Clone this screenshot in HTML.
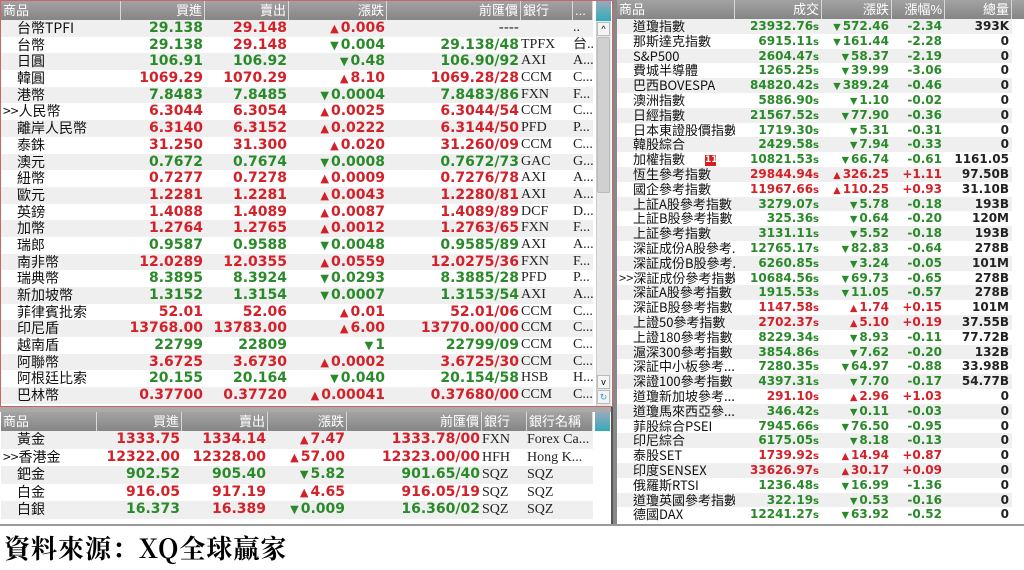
<!DOCTYPE html>
<html><head><meta charset="utf-8"><style>
*{margin:0;padding:0;box-sizing:border-box}
body{width:1024px;height:570px;background:#fff;position:relative;overflow:hidden;font-family:"Liberation Sans","Noto Sans CJK TC",sans-serif}
table{display:block;position:absolute}
tbody{display:block}
tr{display:flex;overflow:hidden}
td,th{display:block;flex:none;white-space:nowrap;overflow:hidden;padding:0}
th{background:linear-gradient(#a3a3a3,#858585);color:#fff;font-weight:normal;font-size:13px;text-align:right;border-right:1px solid #d8d8d8;padding-right:2px;line-height:19px;height:19px}
th.l{text-align:left;padding-left:2px}
tr:nth-child(even) td{background:#efefef}
.n{font-family:"Noto Sans CJK TC",sans-serif;padding-left:16px;color:#111}
.p{padding-left:2px}
.v{font-family:"DejaVu Sans",sans-serif;font-weight:bold;text-align:right}
.g{color:#2a8a2a}.r{color:#d42028}.k{color:#222}
.b{font-family:"Liberation Serif",serif;color:#222}
.ar{font-size:0.8em;margin-right:2px;vertical-align:0}
#lt tr{height:16.7px}#lt td{height:16.7px;font-size:14px;line-height:16.7px}
#lt .v{font-size:14px;padding-right:2px}
#lb tr{height:17.5px}#lb td{height:17.5px;font-size:14px;line-height:17.5px}
#lb .v{font-size:14px;padding-right:2px}
#rt tr{height:14.8px}#rt td{height:14.8px;font-size:13px;line-height:14.8px}
#rt .v{font-size:12px;padding-right:3px}
#lt tr:first-child,#lb tr:first-child,#rt tr:first-child{height:19px}
#lt>tbody>tr>*:nth-child(1){width:120px}#lt>tbody>tr>*:nth-child(2){width:84px}#lt>tbody>tr>*:nth-child(3){width:84px}#lt>tbody>tr>*:nth-child(4){width:98px}#lt>tbody>tr>*:nth-child(5){width:134px}#lt>tbody>tr>*:nth-child(6){width:52px}#lt>tbody>tr>*:nth-child(7){width:20px}
#lb>tbody>tr>*:nth-child(1){width:96px}#lb>tbody>tr>*:nth-child(2){width:85px}#lb>tbody>tr>*:nth-child(3){width:86px}#lb>tbody>tr>*:nth-child(4){width:79px}#lb>tbody>tr>*:nth-child(5){width:135px}#lb>tbody>tr>*:nth-child(6){width:45px}#lb>tbody>tr>*:nth-child(7){width:66px}
#rt>tbody>tr>*:nth-child(1){width:118px}#rt>tbody>tr>*:nth-child(2){width:87px}#rt>tbody>tr>*:nth-child(3){width:70px}#rt>tbody>tr>*:nth-child(4){width:53px}#rt>tbody>tr>*:nth-child(5){width:67px}
.s{font-size:10px}
.badge{display:inline-block;background:#d42020;color:#fff;font-size:9px;font-family:"DejaVu Sans",sans-serif;font-weight:bold;width:11px;height:11px;line-height:11px;text-align:center;margin-left:20px;vertical-align:middle}
</style></head><body>
<div style="position:absolute;left:0;top:0;width:613px;height:407px;border:1px solid #c66"></div>
<div style="position:absolute;left:613px;top:0;width:4px;height:525px;background:#888"></div>
<div style="position:absolute;left:0;top:407px;width:613px;height:5px;background:#aaa"></div>
<div style="position:absolute;left:611px;top:407px;width:2px;height:118px;background:#555"></div>
<div style="position:absolute;left:0;top:524px;width:1024px;height:2px;background:#999"></div>

<table id="lt" style="left:1px;top:1px;width:592px">
<tr><th class="l">商品</th><th>買進</th><th>賣出</th><th>漲跌</th><th>前匯價</th><th class="l">銀行</th><th class="l">...</th></tr>
<tr><td class="n">台幣TPFI</td><td class="v g">29.138</td><td class="v r">29.148</td><td class="v r"><span class="ar">▲</span>0.006</td><td class="v k" style="font-weight:normal">----</td><td class="b"></td><td class="b">..</td></tr>
<tr><td class="n">台幣</td><td class="v g">29.138</td><td class="v r">29.148</td><td class="v g"><span class="ar">▼</span>0.004</td><td class="v g">29.138/48</td><td class="b">TPFX</td><td class="b">台..</td></tr>
<tr><td class="n">日圓</td><td class="v g">106.91</td><td class="v g">106.92</td><td class="v g"><span class="ar">▼</span>0.48</td><td class="v g">106.90/92</td><td class="b">AXI</td><td class="b">A...</td></tr>
<tr><td class="n">韓圓</td><td class="v r">1069.29</td><td class="v r">1070.29</td><td class="v r"><span class="ar">▲</span>8.10</td><td class="v r">1069.28/28</td><td class="b">CCM</td><td class="b">C...</td></tr>
<tr><td class="n">港幣</td><td class="v g">7.8483</td><td class="v g">7.8485</td><td class="v g"><span class="ar">▼</span>0.0004</td><td class="v g">7.8483/86</td><td class="b">FXN</td><td class="b">F...</td></tr>
<tr><td class="n p">&gt;&gt;人民幣</td><td class="v r">6.3044</td><td class="v r">6.3054</td><td class="v r"><span class="ar">▲</span>0.0025</td><td class="v r">6.3044/54</td><td class="b">CCM</td><td class="b">C...</td></tr>
<tr><td class="n">離岸人民幣</td><td class="v r">6.3140</td><td class="v r">6.3152</td><td class="v r"><span class="ar">▲</span>0.0222</td><td class="v r">6.3144/50</td><td class="b">PFD</td><td class="b">P...</td></tr>
<tr><td class="n">泰銖</td><td class="v r">31.250</td><td class="v r">31.300</td><td class="v r"><span class="ar">▲</span>0.020</td><td class="v r">31.260/09</td><td class="b">CCM</td><td class="b">C...</td></tr>
<tr><td class="n">澳元</td><td class="v g">0.7672</td><td class="v g">0.7674</td><td class="v g"><span class="ar">▼</span>0.0008</td><td class="v g">0.7672/73</td><td class="b">GAC</td><td class="b">G...</td></tr>
<tr><td class="n">紐幣</td><td class="v r">0.7277</td><td class="v r">0.7278</td><td class="v r"><span class="ar">▲</span>0.0009</td><td class="v r">0.7276/78</td><td class="b">AXI</td><td class="b">A...</td></tr>
<tr><td class="n">歐元</td><td class="v r">1.2281</td><td class="v r">1.2281</td><td class="v r"><span class="ar">▲</span>0.0043</td><td class="v r">1.2280/81</td><td class="b">AXI</td><td class="b">A...</td></tr>
<tr><td class="n">英鎊</td><td class="v r">1.4088</td><td class="v r">1.4089</td><td class="v r"><span class="ar">▲</span>0.0087</td><td class="v r">1.4089/89</td><td class="b">DCF</td><td class="b">D...</td></tr>
<tr><td class="n">加幣</td><td class="v r">1.2764</td><td class="v r">1.2765</td><td class="v r"><span class="ar">▲</span>0.0012</td><td class="v r">1.2763/65</td><td class="b">FXN</td><td class="b">F...</td></tr>
<tr><td class="n">瑞郎</td><td class="v g">0.9587</td><td class="v g">0.9588</td><td class="v g"><span class="ar">▼</span>0.0048</td><td class="v g">0.9585/89</td><td class="b">AXI</td><td class="b">A...</td></tr>
<tr><td class="n">南非幣</td><td class="v r">12.0289</td><td class="v r">12.0355</td><td class="v r"><span class="ar">▲</span>0.0559</td><td class="v r">12.0275/36</td><td class="b">FXN</td><td class="b">F...</td></tr>
<tr><td class="n">瑞典幣</td><td class="v g">8.3895</td><td class="v g">8.3924</td><td class="v g"><span class="ar">▼</span>0.0293</td><td class="v g">8.3885/28</td><td class="b">PFD</td><td class="b">P...</td></tr>
<tr><td class="n">新加坡幣</td><td class="v g">1.3152</td><td class="v g">1.3154</td><td class="v g"><span class="ar">▼</span>0.0007</td><td class="v g">1.3153/54</td><td class="b">AXI</td><td class="b">A...</td></tr>
<tr><td class="n">菲律賓批索</td><td class="v r">52.01</td><td class="v r">52.06</td><td class="v r"><span class="ar">▲</span>0.01</td><td class="v r">52.01/06</td><td class="b">CCM</td><td class="b">C...</td></tr>
<tr><td class="n">印尼盾</td><td class="v r">13768.00</td><td class="v r">13783.00</td><td class="v r"><span class="ar">▲</span>6.00</td><td class="v r">13770.00/00</td><td class="b">CCM</td><td class="b">C...</td></tr>
<tr><td class="n">越南盾</td><td class="v g">22799</td><td class="v g">22809</td><td class="v g"><span class="ar">▼</span>1</td><td class="v g">22799/09</td><td class="b">CCM</td><td class="b">C...</td></tr>
<tr><td class="n">阿聯幣</td><td class="v r">3.6725</td><td class="v r">3.6730</td><td class="v r"><span class="ar">▲</span>0.0002</td><td class="v r">3.6725/30</td><td class="b">CCM</td><td class="b">C...</td></tr>
<tr><td class="n">阿根廷比索</td><td class="v g">20.155</td><td class="v g">20.164</td><td class="v g"><span class="ar">▼</span>0.040</td><td class="v g">20.154/58</td><td class="b">HSB</td><td class="b">H...</td></tr>
<tr><td class="n">巴林幣</td><td class="v r">0.37700</td><td class="v r">0.37720</td><td class="v r"><span class="ar">▲</span>0.00041</td><td class="v r">0.37680/00</td><td class="b">CCM</td><td class="b">C...</td></tr>
</table>
<div style="position:absolute;left:596px;top:1px;width:15px;height:405px;background:#e8e8e8;border-left:1px solid #ccc"></div>
<div style="position:absolute;left:596px;top:1px;width:15px;height:20px;background:linear-gradient(#9ab,#3ab)"></div>
<div style="position:absolute;left:597px;top:22px;width:13px;height:14px;background:#f4f4f4;border:1px solid #bbb;font-size:9px;text-align:center;line-height:12px">^</div>
<div style="position:absolute;left:597px;top:37px;width:13px;height:156px;background:#d0d0d0;border:1px solid #bbb;border-radius:2px"></div>
<div style="position:absolute;left:597px;top:375px;width:13px;height:14px;background:#f4f4f4;border:1px solid #bbb;font-size:9px;text-align:center;line-height:12px">v</div>
<div style="position:absolute;left:597px;top:390px;width:13px;height:14px;background:#f4f4f4;border:1px solid #bbb;font-size:9px;color:#49c;text-align:center;line-height:12px">↻</div>

<table id="lb" style="left:1px;top:412px;width:592px">
<tr><th class="l">商品</th><th>買進</th><th>賣出</th><th>漲跌</th><th>前匯價</th><th class="l">銀行</th><th class="l">銀行名稱</th></tr>
<tr><td class="n">黃金</td><td class="v r">1333.75</td><td class="v r">1334.14</td><td class="v r"><span class="ar">▲</span>7.47</td><td class="v r">1333.78/00</td><td class="b">FXN</td><td class="b">Forex Ca...</td></tr>
<tr><td class="n p">&gt;&gt;香港金</td><td class="v r">12322.00</td><td class="v r">12328.00</td><td class="v r"><span class="ar">▲</span>57.00</td><td class="v r">12323.00/00</td><td class="b">HFH</td><td class="b">Hong K...</td></tr>
<tr><td class="n">鈀金</td><td class="v g">902.52</td><td class="v g">905.40</td><td class="v g"><span class="ar">▼</span>5.82</td><td class="v g">901.65/40</td><td class="b">SQZ</td><td class="b">SQZ</td></tr>
<tr><td class="n">白金</td><td class="v r">916.05</td><td class="v r">917.19</td><td class="v r"><span class="ar">▲</span>4.65</td><td class="v r">916.05/19</td><td class="b">SQZ</td><td class="b">SQZ</td></tr>
<tr><td class="n">白銀</td><td class="v g">16.373</td><td class="v r">16.389</td><td class="v g"><span class="ar">▼</span>0.009</td><td class="v g">16.360/02</td><td class="b">SQZ</td><td class="b">SQZ</td></tr>
</table>
<div style="position:absolute;left:595px;top:412px;width:15px;height:19px;background:linear-gradient(#9ab,#3ab)"></div>

<div style="position:absolute;left:617px;top:0;width:407px;height:19px;background:linear-gradient(#a3a3a3,#858585)"></div>
<table id="rt" style="left:617px;top:0;width:395px">
<tr><th class="l">商品</th><th>成交</th><th>漲跌</th><th>漲幅%</th><th>總量</th></tr>
<tr><td class="n">道瓊指數</td><td class="v g">23932.76<span class="s">s</span></td><td class="v g"><span class="ar">▼</span>572.46</td><td class="v g">-2.34</td><td class="v k">393K</td></tr>
<tr><td class="n">那斯達克指數</td><td class="v g">6915.11<span class="s">s</span></td><td class="v g"><span class="ar">▼</span>161.44</td><td class="v g">-2.28</td><td class="v k">0</td></tr>
<tr><td class="n">S&amp;P500</td><td class="v g">2604.47<span class="s">s</span></td><td class="v g"><span class="ar">▼</span>58.37</td><td class="v g">-2.19</td><td class="v k">0</td></tr>
<tr><td class="n">費城半導體</td><td class="v g">1265.25<span class="s">s</span></td><td class="v g"><span class="ar">▼</span>39.99</td><td class="v g">-3.06</td><td class="v k">0</td></tr>
<tr><td class="n">巴西BOVESPA</td><td class="v g">84820.42<span class="s">s</span></td><td class="v g"><span class="ar">▼</span>389.24</td><td class="v g">-0.46</td><td class="v k">0</td></tr>
<tr><td class="n">澳洲指數</td><td class="v g">5886.90<span class="s">s</span></td><td class="v g"><span class="ar">▼</span>1.10</td><td class="v g">-0.02</td><td class="v k">0</td></tr>
<tr><td class="n">日經指數</td><td class="v g">21567.52<span class="s">s</span></td><td class="v g"><span class="ar">▼</span>77.90</td><td class="v g">-0.36</td><td class="v k">0</td></tr>
<tr><td class="n">日本東證股價指數</td><td class="v g">1719.30<span class="s">s</span></td><td class="v g"><span class="ar">▼</span>5.31</td><td class="v g">-0.31</td><td class="v k">0</td></tr>
<tr><td class="n">韓股綜合</td><td class="v g">2429.58<span class="s">s</span></td><td class="v g"><span class="ar">▼</span>7.94</td><td class="v g">-0.33</td><td class="v k">0</td></tr>
<tr><td class="n">加權指數<span class="badge">11</span></td><td class="v g">10821.53<span class="s">s</span></td><td class="v g"><span class="ar">▼</span>66.74</td><td class="v g">-0.61</td><td class="v k">1161.05</td></tr>
<tr><td class="n">恆生參考指數</td><td class="v r">29844.94<span class="s">s</span></td><td class="v r"><span class="ar">▲</span>326.25</td><td class="v r">+1.11</td><td class="v k">97.50B</td></tr>
<tr><td class="n">國企參考指數</td><td class="v r">11967.66<span class="s">s</span></td><td class="v r"><span class="ar">▲</span>110.25</td><td class="v r">+0.93</td><td class="v k">31.10B</td></tr>
<tr><td class="n">上証A股參考指數</td><td class="v g">3279.07<span class="s">s</span></td><td class="v g"><span class="ar">▼</span>5.78</td><td class="v g">-0.18</td><td class="v k">193B</td></tr>
<tr><td class="n">上証B股參考指數</td><td class="v g">325.36<span class="s">s</span></td><td class="v g"><span class="ar">▼</span>0.64</td><td class="v g">-0.20</td><td class="v k">120M</td></tr>
<tr><td class="n">上証參考指數</td><td class="v g">3131.11<span class="s">s</span></td><td class="v g"><span class="ar">▼</span>5.52</td><td class="v g">-0.18</td><td class="v k">193B</td></tr>
<tr><td class="n">深証成份A股參考...</td><td class="v g">12765.17<span class="s">s</span></td><td class="v g"><span class="ar">▼</span>82.83</td><td class="v g">-0.64</td><td class="v k">278B</td></tr>
<tr><td class="n">深証成份B股參考...</td><td class="v g">6260.85<span class="s">s</span></td><td class="v g"><span class="ar">▼</span>3.24</td><td class="v g">-0.05</td><td class="v k">101M</td></tr>
<tr><td class="n p">&gt;&gt;深証成份參考指數</td><td class="v g">10684.56<span class="s">s</span></td><td class="v g"><span class="ar">▼</span>69.73</td><td class="v g">-0.65</td><td class="v k">278B</td></tr>
<tr><td class="n">深証A股參考指數</td><td class="v g">1915.53<span class="s">s</span></td><td class="v g"><span class="ar">▼</span>11.05</td><td class="v g">-0.57</td><td class="v k">278B</td></tr>
<tr><td class="n">深証B股參考指數</td><td class="v r">1147.58<span class="s">s</span></td><td class="v r"><span class="ar">▲</span>1.74</td><td class="v r">+0.15</td><td class="v k">101M</td></tr>
<tr><td class="n">上證50參考指數</td><td class="v r">2702.37<span class="s">s</span></td><td class="v r"><span class="ar">▲</span>5.10</td><td class="v r">+0.19</td><td class="v k">37.55B</td></tr>
<tr><td class="n">上證180參考指數</td><td class="v g">8229.34<span class="s">s</span></td><td class="v g"><span class="ar">▼</span>8.93</td><td class="v g">-0.11</td><td class="v k">77.72B</td></tr>
<tr><td class="n">滬深300參考指數</td><td class="v g">3854.86<span class="s">s</span></td><td class="v g"><span class="ar">▼</span>7.62</td><td class="v g">-0.20</td><td class="v k">132B</td></tr>
<tr><td class="n">深証中小板參考...</td><td class="v g">7280.35<span class="s">s</span></td><td class="v g"><span class="ar">▼</span>64.97</td><td class="v g">-0.88</td><td class="v k">33.98B</td></tr>
<tr><td class="n">深證100參考指數</td><td class="v g">4397.31<span class="s">s</span></td><td class="v g"><span class="ar">▼</span>7.70</td><td class="v g">-0.17</td><td class="v k">54.77B</td></tr>
<tr><td class="n">道瓊新加坡參考...</td><td class="v r">291.10<span class="s">s</span></td><td class="v r"><span class="ar">▲</span>2.96</td><td class="v r">+1.03</td><td class="v k">0</td></tr>
<tr><td class="n">道瓊馬來西亞參...</td><td class="v g">346.42<span class="s">s</span></td><td class="v g"><span class="ar">▼</span>0.11</td><td class="v g">-0.03</td><td class="v k">0</td></tr>
<tr><td class="n">菲股綜合PSEI</td><td class="v g">7945.66<span class="s">s</span></td><td class="v g"><span class="ar">▼</span>76.50</td><td class="v g">-0.95</td><td class="v k">0</td></tr>
<tr><td class="n">印尼綜合</td><td class="v g">6175.05<span class="s">s</span></td><td class="v g"><span class="ar">▼</span>8.18</td><td class="v g">-0.13</td><td class="v k">0</td></tr>
<tr><td class="n">泰股SET</td><td class="v r">1739.92<span class="s">s</span></td><td class="v r"><span class="ar">▲</span>14.94</td><td class="v r">+0.87</td><td class="v k">0</td></tr>
<tr><td class="n">印度SENSEX</td><td class="v r">33626.97<span class="s">s</span></td><td class="v r"><span class="ar">▲</span>30.17</td><td class="v r">+0.09</td><td class="v k">0</td></tr>
<tr><td class="n">俄羅斯RTSI</td><td class="v g">1236.48<span class="s">s</span></td><td class="v g"><span class="ar">▼</span>16.99</td><td class="v g">-1.36</td><td class="v k">0</td></tr>
<tr><td class="n">道瓊英國參考指數</td><td class="v g">322.19<span class="s">s</span></td><td class="v g"><span class="ar">▼</span>0.53</td><td class="v g">-0.16</td><td class="v k">0</td></tr>
<tr><td class="n">德國DAX</td><td class="v g">12241.27<span class="s">s</span></td><td class="v g"><span class="ar">▼</span>63.92</td><td class="v g">-0.52</td><td class="v k">0</td></tr>
</table>

<div style="position:absolute;left:4px;top:531px;font-family:'Noto Serif CJK SC',serif;font-weight:bold;font-size:26px;line-height:34px;color:#000;letter-spacing:1px">資料來源：XQ全球贏家</div>
</body></html>
